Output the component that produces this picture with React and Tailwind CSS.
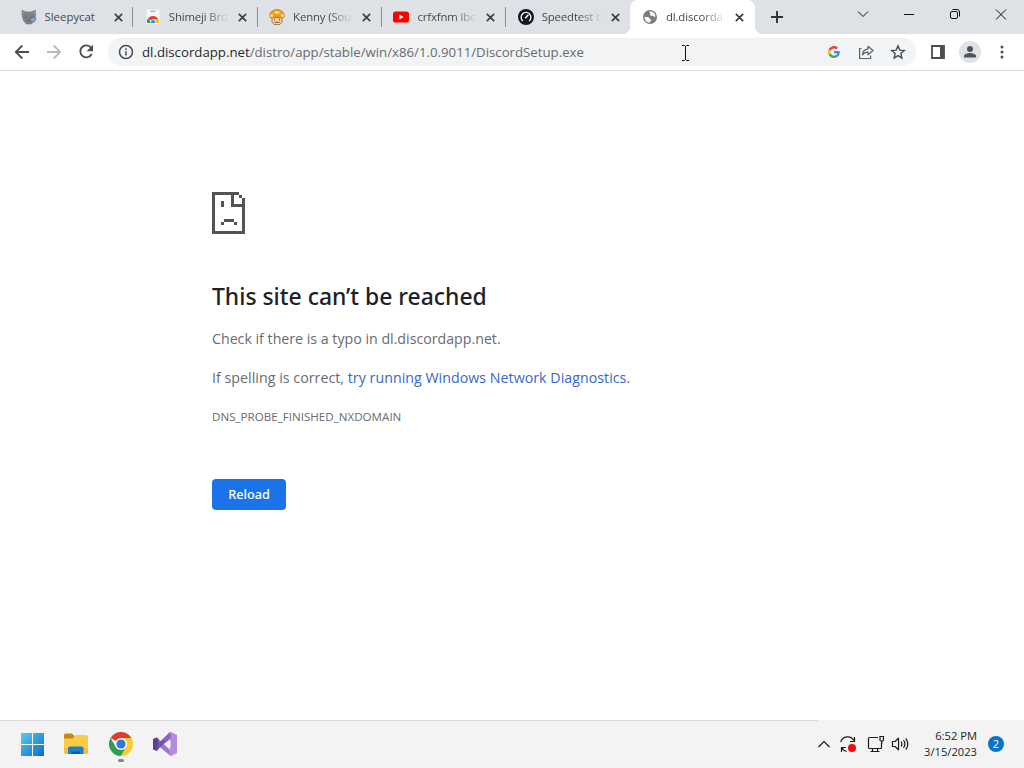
const tabs = [
  { title: "Sleepycat", icon: <CatIcon /> },
  { title: "Shimeji Bro", icon: <StoreIcon /> },
  { title: "Kenny (Sou", icon: <MushroomIcon /> },
  { title: "crfxfnm lbc", icon: <YoutubeIcon /> },
  { title: "Speedtest b", icon: <SpeedtestIcon /> },
  { title: "dl.discorda", icon: <GlobeIcon />, active: true },
];

function CatIcon() {
  return (
    <svg className="size-4" viewBox="0 0 16 16">
      <path d="M.8 .8l4 1.700h5.600l4.200-1.700.4 5-1 5.500-3.500 4H5l-3-4L.6 6z" fill="#7f8087" />
      <path d="M2 2.500l2 1.200-1.600 2zM14 2.500l-2 1.200 1.600 2z" fill="#a39ca2" />
      <path d="M4 7.800l2 .8M9.500 8.600l2-.8M6 12l1.500-1 1.500 1" stroke="#505866" fill="none" />
      <path d="M9.300 10c2-2 4.600-2.500 5.700-.5 0 3-2.600 4.500-5 3.500z" fill="#84a3cb" stroke="#50688f" strokeWidth=".6" />
    </svg>
  );
}

function StoreIcon() {
  return (
    <svg className="size-4" viewBox="0 0 16 16">
      <path d="M1.500 .5h13v14.500h-13z" fill="#f5f6f7" />
      <path d="M6 2.300h4" stroke="#b4b7bb" strokeWidth="1.400" strokeLinecap="round" />
      <path d="M2.800 10a6 6 0 0 1 10.400 0L8 12z" fill="#db4437" />
      <path d="M2.800 9.600L6.800 14H3a1 1 0 0 1-1-1 6 6 0 0 1 .8-3.400z" fill="#0f9d58" />
      <path d="M8 10h5.200a6 6 0 0 1 .8 3 1 1 0 0 1-1 1H8z" fill="#f4c20d" />
      <path d="M4.900 14a3.100 3.600 0 0 1 6.200 0z" fill="#fff" />
      <path d="M5.600 14a2.400 2.900 0 0 1 4.800 0z" fill="#4285f4" />
    </svg>
  );
}

function MushroomIcon() {
  return (
    <svg className="size-4" viewBox="0 0 16 16">
      <path d="M3 8.500h10v4.500l-2 2.500H5L3 13z" fill="#f0d2a0" stroke="#99683c" strokeWidth=".8" />
      <path d="M.7 7C.7 3 4 .6 8 .6s7.300 2.400 7.300 6.400c0 1.800-1.500 2.400-3 2-3-1-6-1-8.600 0-1.500.4-3-.3-3-2z" fill="#f29a22" stroke="#b56718" strokeWidth=".6" />
      <path d="M5.300 3.200a3 2 0 0 1 5.400 0c.2 2-5.600 2-5.400 0z" fill="#ffe277" />
      <circle cx="2.700" cy="6.500" r="1.500" fill="#ffe277" />
      <circle cx="13.300" cy="6.500" r="1.500" fill="#ffe277" />
      <path d="M5.500 9.800v1.500M10.500 9.800v1.500M5.500 13.300h5" stroke="#725438" />
    </svg>
  );
}

function YoutubeIcon() {
  return (
    <svg className="size-4" viewBox="0 0 16 16">
      <rect y="2.500" width="16" height="11" rx="2.600" fill="#f00" />
      <path d="M6.400 5.600v4.800L10.600 8z" fill="#fff" />
    </svg>
  );
}

function SpeedtestIcon() {
  return (
    <svg className="size-4" viewBox="0 0 16 16">
      <circle cx="8" cy="8" r="8" fill="#141526" />
      <path d="M4.900 12.100a4.900 4.900 0 1 1 6.200 0" fill="none" stroke="#fff" strokeWidth="1.300" />
      <path d="M7.300 9.200l3-3.500" stroke="#fff" strokeWidth="1.700" />
    </svg>
  );
}

function GlobeIcon() {
  return (
    <svg className="size-4" viewBox="0 0 16 16">
      <circle cx="8" cy="8" r="7" fill="#7b7d80" />
      <path d="M2.500 8.200c2.500-.3 4.400.1 5 1.300.6 1.100 1.700.4 1.700 1.700 0 1-1.400 1-1.400 2.300-3 0-5.200-2.300-5.300-5.300zM7.200 2.600h2.500c2 .7 3.500 2.500 3.800 4.700-1 1-1.700.7-2.300-.2-.7-.9-2.100 0-3.100-.8-.8-.8.5-1.200.2-2C8 3.700 7.200 3.500 7.200 2.600z" fill="#fff" />
    </svg>
  );
}

function Tab({ tab, separator }) {
  return (
    <div
      className={
        tab.active
          ? "relative flex h-[34px] w-[124.300px] shrink-0 items-center rounded-t-lg bg-white pl-[11.500px]"
          : "relative flex h-[34px] w-[124.300px] shrink-0 items-center pl-[11.500px]"
      }
    >
      {tab.active && (
        <>
          <span className="absolute bottom-0 -left-2 size-2 bg-[radial-gradient(circle_at_0_0,transparent_8px,#fff_8.500px)]" />
          <span className="absolute -right-2 bottom-0 size-2 bg-[radial-gradient(circle_at_100%_0,transparent_8px,#fff_8.500px)]" />
        </>
      )}
      {tab.icon}
      <span
        className={
          tab.title === "Sleepycat"
            ? "ml-2 w-[60px] text-[11.400px] leading-4 whitespace-nowrap text-[#45484c]"
            : "ml-2 w-[60px] mask-r-from-60% text-[11.400px] leading-4 tracking-[-0.150px] whitespace-nowrap text-[#45484c]"
        }
      >
        {tab.title}
      </span>
      <svg className="ml-[9px] size-[9px] shrink-0" viewBox="0 0 9 9">
        <path d="M.8.8l7.400 7.400M8.200.8L.8 8.200" stroke="#3c4043" strokeWidth="1.700" />
      </svg>
      {separator && <span className="absolute right-0 h-5 w-px bg-[#8b8e93]" />}
    </div>
  );
}

function WindowControls() {
  return (
    <svg className="ml-auto h-[28px] w-[184px]" viewBox="840 0 184 28" fill="none" stroke="#111">
      <path d="M858 11.500l5 5 5-5" />
      <path d="M904 14.500h10" />
      <rect x="950.500" y="11.500" width="7" height="7" rx="1.500" />
      <path d="M952.500 9.500h4.500a2.500 2.500 0 0 1 2.500 2.500v4.500" />
      <path d="M996 9.500l10 10M1006 9.500l-10 10" />
    </svg>
  );
}

function TabStrip() {
  return (
    <div className="flex h-[34px] items-start bg-[#dee1e6] pl-[9px]">
      {tabs.map((tab, i) => (
        <Tab key={tab.title} tab={tab} separator={i < 4} />
      ))}
      <svg className="mt-[11px] ml-4 size-3" viewBox="0 0 12 12">
        <path d="M6 0v12M0 6h12" stroke="#2f3236" strokeWidth="1.900" />
      </svg>
      <WindowControls />
    </div>
  );
}

function GoogleIcon() {
  return (
    <svg className="size-3" viewBox="0 0 48 48">
      <path fill="#EA4335" d="M24 9.500c3.540 0 6.710 1.220 9.210 3.600l6.850-6.850C35.900 2.380 30.470 0 24 0 14.620 0 6.510 5.380 2.560 13.220l7.980 6.190C12.430 13.720 17.740 9.500 24 9.500z" />
      <path fill="#4285F4" d="M46.980 24.550c0-1.570-.15-3.090-.38-4.550H24v9.020h12.940c-.58 2.960-2.260 5.480-4.780 7.180l7.730 6c4.510-4.180 7.090-10.360 7.090-17.650z" />
      <path fill="#FBBC05" d="M10.530 28.590c-.48-1.450-.76-2.990-.76-4.590s.27-3.140.76-4.590l-7.980-6.190C.92 16.460 0 20.120 0 24s.92 7.540 2.560 10.780l7.970-6.190z" />
      <path fill="#34A853" d="M24 48c6.480 0 11.930-2.130 15.890-5.810l-7.730-6c-2.150 1.450-4.920 2.300-8.160 2.300-6.260 0-11.570-4.220-13.470-9.910l-7.980 6.190C6.510 42.620 14.620 48 24 48z" />
    </svg>
  );
}

function Toolbar() {
  return (
    <div className="flex h-[37px] items-center border-b border-[#d9dbde] bg-white pl-[14px]">
      <div className="flex gap-4">
        <svg className="size-4" viewBox="0 0 16 16" fill="none" stroke="#4b4e53" strokeWidth="1.800">
          <path d="M15 8H2M8.300 1.500L1.800 8l6.500 6.500" />
        </svg>
        <svg className="size-4" viewBox="0 0 16 16" fill="none" stroke="#b9bbbe" strokeWidth="1.800">
          <path d="M1 8h13M7.700 1.500L14.200 8l-6.500 6.500" />
        </svg>
        <svg className="size-4" viewBox="0 0 16 16">
          <path d="M13 3.600A6 6 0 1 0 13.700 10" fill="none" stroke="#4b4e53" strokeWidth="1.900" />
          <path d="M15 .8v6.400H8.600z" fill="#4b4e53" />
        </svg>
      </div>
      <div className="ml-[14px] flex h-7 w-[808px] items-center rounded-full bg-[#f1f3f4] px-[10px]">
        <svg className="size-4" viewBox="0 0 16 16" fill="none" stroke="#4b4e53" strokeWidth="1.500">
          <circle cx="8" cy="8" r="6.500" />
          <path d="M8 7.200v4.300M8 4.300v1.600" />
        </svg>
        <span className="ml-2 text-[13.230px] leading-5 whitespace-nowrap text-[#676b70]">
          <span className="text-[#27292c]">dl.discordapp.net</span>
          /distro/app/stable/win/x86/1.0.9011/DiscordSetup.exe
        </span>
        <div className="ml-auto flex items-center gap-4">
          <div className="flex size-4 items-center justify-center">
            <GoogleIcon />
          </div>
          <svg className="size-4" viewBox="0 0 16 16" fill="none" stroke="#5f6368" strokeWidth="1.200">
            <path d="M3.500 4.500H1.600v10h11v-3" />
            <path d="M4.500 11c.2-3.800 2-5.700 5.500-5.900V2.300L15 6.500l-5 4.300V8.200C7.500 8.100 5.800 9 4.500 11z" strokeLinejoin="round" />
          </svg>
          <svg className="size-4" viewBox="0 0 16 16" fill="none" stroke="#4b4e53" strokeWidth="1.400">
            <path d="M8 1.900l1.800 4.200 4.500.4-3.400 3 1 4.500L8 11.600 4.100 14l1-4.500-3.400-3 4.500-.4z" />
          </svg>
        </div>
      </div>
      <svg className="ml-[15px] h-[14px] w-[14px]" viewBox="0 0 14 14">
        <path d="M1 1h12v12H1z" fill="none" stroke="#4b4e53" strokeWidth="1.800" />
        <path d="M9 1h4v12H9z" fill="#4b4e53" />
      </svg>
      <svg className="ml-[14px] size-[22px]" viewBox="0 0 22 22">
        <circle cx="11" cy="11" r="11" fill="#dee1e6" />
        <circle cx="11" cy="8" r="3" fill="#4b5460" />
        <path d="M5 16.500v-1.400c0-2 4-3 6-3s6 1 6 3v1.400z" fill="#4b5460" />
      </svg>
      <svg className="ml-[19px] h-4 w-1" viewBox="0 0 4 16" fill="#4b4e53">
        <circle cx="2" cy="3" r="1.500" />
        <circle cx="2" cy="8" r="1.500" />
        <circle cx="2" cy="13" r="1.500" />
      </svg>
    </div>
  );
}

function SadPage() {
  return (
    <svg className="h-[42px] w-[33px]" viewBox="0 0 33 42" fill="#535353">
      <path d="M0 0h27v3h-5v9h8V6h3v36H0zM3 3v36h27V15H19V3z" fillRule="evenodd" />
      <path d="M27 3h3v3h-3zM9 9h3v6H9zM12 27h10v3H12zM9 30h3v3H9zM22 30h3v3h-3z" />
    </svg>
  );
}

function ErrorPage() {
  return (
    <main className="flex-1 bg-white pt-[121px] pl-[212px]">
      <SadPage />
      <h1 className="mt-[48px] font-['Noto_Sans'] text-[22.900px] leading-[30px] font-medium text-[#202124]">
        This site can’t be reached
      </h1>
      <p className="mt-[17px] text-[14.200px] leading-5 text-[#686b6f]">
        Check if there is a typo in dl.discordapp.net.
      </p>
      <p className="mt-[19px] text-[14.200px] leading-5 tracking-[0.040px] text-[#686b6f]">
        If spelling is correct, <a className="text-[#3567cc]">try running Windows Network Diagnostics</a>.
      </p>
      <p className="mt-[19px] text-[11.600px] leading-5 text-[#686b6f]">DNS_PROBE_FINISHED_NXDOMAIN</p>
      <button className="mt-[52px] h-[31px] w-[74px] rounded bg-[#1a73e8] font-['Noto_Sans'] text-[12.700px] font-medium text-white">
        Reload
      </button>
    </main>
  );
}

function StartIcon() {
  return (
    <svg className="size-6" viewBox="0 0 24 24">
      <defs>
        <linearGradient id="start" x1="0" y1="0" x2="1" y2="1">
          <stop stopColor="#5acbf5" />
          <stop offset="1" stopColor="#0570c3" />
        </linearGradient>
      </defs>
      <path d="M1 1h11v11H1zM13 1h11v11H13zM1 13h11v11H1zM13 13h11v11H13z" fill="url(#start)" />
    </svg>
  );
}

function FolderIcon() {
  return (
    <svg className="size-6" viewBox="0 0 24 24">
      <path d="M0 3.500C0 2 .8 1.500 2 1.500h6L10.500 4v6H0z" fill="#c88913" />
      <path d="M1 6.500h8L11.500 3H22a2 2 0 0 1 2 2v15a2 2 0 0 1-2 2H2a2 2 0 0 1-2-2V7.500z" fill="#fcca45" />
      <path d="M0 16h24v4a2 2 0 0 1-2 2H2a2 2 0 0 1-2-2z" fill="#f6bf3a" />
      <path d="M4 22v-5.500a2 2 0 0 1 2-2h11.500a2 2 0 0 1 2 2V22z" fill="#1b7fd0" />
      <path d="M7.500 22v-2.500h8.500V22z" fill="#0b5ba5" />
    </svg>
  );
}

function ChromeIcon() {
  return (
    <svg className="size-6" viewBox="0 0 24 24">
      <path d="M12 12L1.600 6a12 12 0 0 1 20.800 0z" fill="#df3c30" />
      <path d="M12 12l-5.200 3L1.600 6A12 12 0 0 0 12 24l5.200-9z" fill="#2da04c" />
      <path d="M12 6h10.400A12 12 0 0 1 12 24l5.200-9z" fill="#fccb2d" />
      <circle cx="12" cy="12" r="6" fill="#fff" />
      <circle cx="12" cy="12" r="4.600" fill="#2f77df" />
    </svg>
  );
}

function VisualStudioIcon() {
  return (
    <svg className="size-6" viewBox="0 0 24 24">
      <path d="M0 7l4-1.500L17 18v5.500L5.500 14 3 16.500z" fill="#9a79cf" />
      <path d="M0 7l4-1.500 1.500 2V17L4 19l-4-1.500z" fill="#5b3f91" />
      <path d="M3.500 18.500l14-12.500V0L5 11.500z" fill="#7450b2" />
      <path d="M16.500.3L18 0l6 3v18l-6 3-1.500-.500V15.800l1-.300v-7l-1-.500z" fill="#b58ae4" />
      <path d="M17 0l1 6-5 4.500L10 7z" fill="#8a63c8" />
    </svg>
  );
}

function Tray() {
  return (
    <div className="ml-auto flex h-full items-center pr-5">
      <svg className="h-6 w-[94px]" viewBox="816 732 94 24" fill="none" stroke="#1b1b1b" strokeWidth="1.200">
        <path d="M818.500 747l5.500-5.500 5.500 5.500" />
        <path d="M840.700 742a7.300 7.300 0 0 1 13.300-1.500M854.500 737v4.500H850" />
        <path d="M841.500 752v-4.500h4.500M841.700 747.800a8 8 0 0 0 5 3.700" />
        <circle cx="852" cy="748" r="4" fill="#f5090d" stroke="none" />
        <path d="M878 737.500h-8.500a1 1 0 0 0-1 1v9a1 1 0 0 0 1 1h11a1 1 0 0 0 1-1v-4.500M872.500 748.500v3M877.500 748.500v3M870.500 751.500h9" />
        <path d="M880 736.500h3.500v3.500a1 1 0 0 1-1 1H881a1 1 0 0 1-1-1zM881.700 741v3" />
        <path d="M892.500 741.500h2.500l3.500-3.300v11.600L895 746.500h-2.500z" strokeLinejoin="round" />
        <path d="M901 741.500q1.800 2.500 0 5M903.500 740q2.800 4 0 8M905.800 738.300q4 5.700 0 11.400" />
      </svg>
      <div className="ml-[5px] w-[62px] text-right text-[11.200px] leading-4 whitespace-nowrap text-[#242424]">
        <div>6:52 PM</div>
        <div>3/15/2023</div>
      </div>
      <div className="ml-[11px] flex size-4 items-center justify-center rounded-full bg-[#0873c7] text-[11px] text-white">
        2
      </div>
    </div>
  );
}

function Taskbar() {
  return (
    <footer className="flex h-12 items-center bg-[#f3f3f3] pl-5">
      <span className="absolute bottom-[47px] left-0 h-px w-[818px] bg-[#dcdcdc]" />
      <div className="flex items-center gap-[20.300px]">
        <StartIcon />
        <FolderIcon />
        <div className="relative">
          <ChromeIcon />
          <span className="absolute -bottom-[6px] left-[9px] h-[3px] w-[6px] rounded-full bg-[#858585]" />
        </div>
        <VisualStudioIcon />
      </div>
      <Tray />
    </footer>
  );
}

export default function App() {
  return (
    <div className="relative flex h-screen w-screen flex-col overflow-hidden font-['Open_Sans','Noto_Sans',sans-serif]">
      <TabStrip />
      <Toolbar />
      <ErrorPage />
      <Taskbar />
      {/* text cursor over the address bar */}
      <svg className="absolute top-[45px] left-[681px] h-4 w-[9px]" viewBox="0 0 9 16" fill="none" stroke="#111">
        <path d="M1 .5h2.500l1 1 1-1H8M4.500 1v14M1 15.500h2.500l1-1 1 1H8" />
      </svg>
    </div>
  );
}
